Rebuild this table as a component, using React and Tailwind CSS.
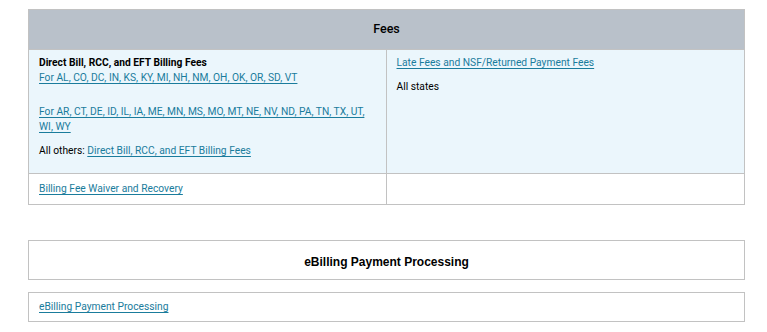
import React from 'react'

const linkCls = 'text-[#1a7c9c] underline underline-offset-2 decoration-[#1a7c9c]'

const FeesTable = () => {
  return (
    <div className="w-[717px] border border-[#c2c2c2]">
      <div className="h-[40px] bg-[#b9c1ca] flex items-center justify-center border-b border-[#c2c2c2]">
        <h2 className="text-[12.5px] font-medium text-black" style={{ fontFamily: 'Roboto, sans-serif' }}>Fees</h2>
      </div>
      <div className="grid grid-cols-2 bg-[#ebf6fc] border-b border-[#c2c2c2]">
        <div className="border-r border-[#c2c2c2] pl-[10px] pr-2 pt-[5px] pb-[15px] leading-[15px]">
          <p className="font-bold text-black">Direct Bill, RCC, and EFT Billing Fees</p>
          <p><a href="#" className={linkCls}>For AL, CO, DC, IN, KS, KY, MI, NH, NM, OH, OK, OR, SD, VT</a></p>
          <p className="mt-[19px]"><a href="#" className={linkCls}>For AR, CT, DE, ID, IL, IA, ME, MN, MS, MO, MT, NE, NV, ND, PA, TN, TX, UT, WI, WY</a></p>
          <p className="mt-[9px]">All others: <a href="#" className={linkCls}>Direct Bill, RCC, and EFT Billing Fees</a></p>
        </div>
        <div className="pl-[10px] pr-2 pt-[5px] leading-[15px]">
          <p><a href="#" className={linkCls}>Late Fees and NSF/Returned Payment Fees</a></p>
          <p className="mt-[9px]">All states</p>
        </div>
      </div>
      <div className="grid grid-cols-2 leading-[15px]">
        <div className="border-r border-[#c2c2c2] pl-[10px] pt-[7px] pb-[8px]">
          <a href="#" className={linkCls}>Billing Fee Waiver and Recovery</a>
        </div>
        <div />
      </div>
    </div>
  )
}

const App = () => {
  return (
    <div className="bg-white min-h-screen pt-[9px] pl-[28px] text-[10.25px] text-black" style={{ fontFamily: 'Roboto, sans-serif' }}>
      <FeesTable />
      <div className="mt-[35px] w-[717px] h-[40px] pt-[4px] border border-[#c2c2c2] flex items-center justify-center">
        <h2 className="text-[12px] font-bold text-black" style={{ fontFamily: '"Liberation Sans", Arial, sans-serif' }}>eBilling Payment Processing</h2>
      </div>
      <div className="mt-[12px] w-[717px] border border-[#c2c2c2] pl-[10px] pt-[6px] pb-[7px] leading-[15px]">
        <a href="#" className={linkCls}>eBilling Payment Processing</a>
      </div>
    </div>
  )
}

export default App
